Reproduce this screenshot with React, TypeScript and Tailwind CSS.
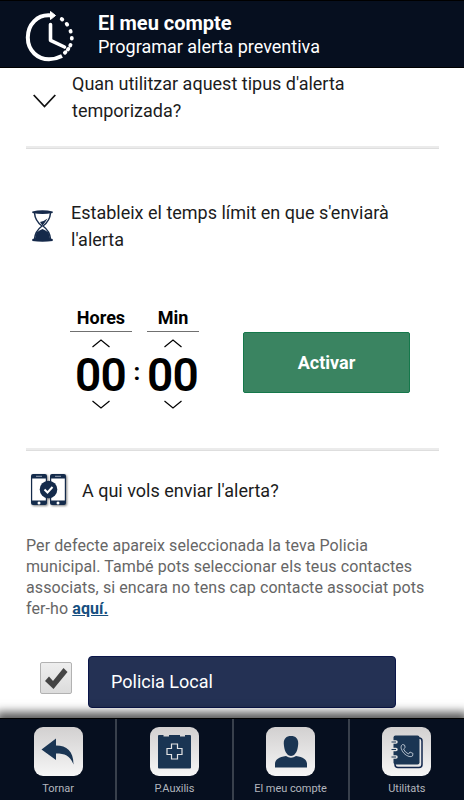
import { ReactNode, useState } from 'react';

interface SpinnerProps {
  label: string;
  value: number;
  width: string;
  onChange: (value: number) => void;
}

const pad = (n: number) => String(n).padStart(2, '0');

const ClockIcon = () => (
  <svg className="h-[52px] w-[50px]" viewBox="0 0 50 52" fill="none" stroke="#fff">
    <path d="M27 5.500C12 3.500 2.800 15 2.800 27.500C2.800 41 13 49.300 24 49.300C29 49.300 33 48 37 46" strokeWidth="4" />
    <path d="M25.500 1.500L30.500 5.500L25.500 9.500Z" fill="#fff" strokeWidth="1" strokeLinejoin="round" />
    <path d="M25.500 14.500V30.300L39.500 37" strokeWidth="3.600" strokeLinecap="round" strokeLinejoin="round" />
    <path d="M36.700 9L37.300 9.500M41.700 13.900L42.200 14.600M45.500 21L45.700 21.600M46.800 28L46.800 28.600M45.500 35L45.200 35.600M43.300 38.900L42.900 39.500M40.400 42.300L39.900 42.700" strokeWidth="3.800" strokeLinecap="round" />
  </svg>
);

const HourglassIcon = () => (
  <svg className="h-8 w-[22px]" viewBox="0 0 22 32" fill="none">
    <path d="M2.500 3C3 10 6 13 10 16C6 19 3 22 2.500 29M18.500 3C18 10 15 13 11 16C15 19 18 22 18.500 29" stroke="#1a2e4e" strokeWidth="1.500" />
    <path d="M.3 1.500Q10.500-.8 20.700 1.500V3Q10.500 4.800.3 3Z" fill="#15294a" />
    <path d="M15.500 8.500Q12.500 11 8 12L10.500 15.500Q13.500 12 15.500 8.500Z" fill="#15294a" />
    <path d="M10.500 19Q13.500 20 16.500 22.500L18 28.500L20.700 29V31Q10.500 32.500.3 31V29L3 28.500L4.500 22.500Q7.500 20 10.500 19Z" fill="#15294a" />
  </svg>
);

const PhonesIcon = () => (
  <svg className="h-[34px] w-[38px] drop-shadow-[1px_1px_1px_rgba(0,0,0,0.5)]" viewBox="0 0 38 34">
    {[0, 19].map((x) => (
      <g key={x} transform={`translate(${x} 0)`}>
        <rect x="1" y="1" width="16" height="31" rx="2" fill="#142b4b" />
        <path d="M2.200 5.500H15.800V27.500H2.200Z" fill="#fff" />
        <path d="M6 3.300H12" stroke="#b6c0ce" strokeWidth=".8" />
        <circle cx="9" cy="30" r="1.500" fill="#fff" />
      </g>
    ))}
    <circle cx="18.500" cy="16.500" r="8.800" fill="#142b4b" />
    <path d="M14.500 16.500L17.500 19.500L22.500 14" fill="none" stroke="#fff" strokeWidth="2" />
  </svg>
);

const TimeSpinner = ({ label, value, width, onChange }: SpinnerProps) => (
  <div className={`flex flex-col items-center ${width}`}>
    <div className="flex h-[29px] w-full justify-center border-b border-[#707070] text-[18px] leading-[29px] font-bold text-black">
      {label}
    </div>
    <button className="mt-[7px] h-[9px]" onClick={() => onChange(value + 1)}>
      <svg className="h-[9px] w-[18px]" viewBox="0 0 18 9" fill="none" stroke="#000" strokeWidth="1.200">
        <path d="M.500 8L9 1L17.500 8" />
      </svg>
    </button>
    <div className="mt-[3px] h-[49px] pr-px text-[46px] leading-[49px] font-semibold tracking-[-0.8px] text-black">{pad(value)}</div>
    <button className="h-[9px]" onClick={() => onChange(Math.max(0, value - 1))}>
      <svg className="h-[9px] w-[18px]" viewBox="0 0 18 9" fill="none" stroke="#000" strokeWidth="1.200">
        <path d="M.500 1L9 8L17.500 1" />
      </svg>
    </button>
  </div>
);

const navItems: { label: string; icon: ReactNode }[] = [
  {
    label: 'Tornar',
    icon: <path d="M7.500 22.500L22 11.500V18.500C33 18.500 39.500 24.500 39.500 37.500C36 28.500 31 26.500 22 26.500V33Z" fill="#1a3553" />,
  },
  {
    label: 'P.Auxilis',
    icon: (
      <>
        <path d="M9 8H13.500V9.500H19V8H30V9.500H35V8H40Q41 8 41 9V40.500Q41 41.500 40 41.500H9Q8 41.500 8 40.500V9Q8 8 9 8Z" fill="#1a3553" />
        <path d="M21.500 17H27.500V21.500H32V27.500H27.500V32H21.500V27.500H17V21.500H21.500Z" fill="none" stroke="#e4e4e4" strokeWidth="1.200" />
      </>
    ),
  },
  {
    label: 'El meu compte',
    icon: (
      <path d="M25 9C20 9 17.500 12 17.800 17C18 20 18.500 22 19 23.500C20 26 22 29 25 29C28 29 30 26 31 23.500C31.500 22 32 20 32.200 17C32.500 12 30 9 25 9ZM9 40.500V37C9 32.500 13 30 20 29Q25 32.500 30 29C37 30 41 32.500 41 37V40.500Z" fill="#1a3553" />
    ),
  },
  {
    label: 'Utilitats',
    icon: (
      <>
        <rect x="13" y="11" width="27" height="29.500" rx="3" fill="#e8e8e8" stroke="#11264c" strokeWidth="1.500" />
        <rect x="11.500" y="8.500" width="26" height="29" rx="2" fill="#1a3553" />
        <path d="M10 15H14M10 22.500H14M10 30H14" stroke="#e0e0e0" strokeWidth="3.500" strokeLinecap="round" />
        <path d="M9.500 15H14M9.500 22.500H14M9.500 30H14" stroke="#1a3553" strokeWidth="1.200" />
        <path d="M20.500 17.500L22.500 18L23.200 20.500L21.500 22Q23 25.500 26.500 27L28 25L31 26.500L30.500 29Q29.500 30 27 29.500Q21 27.500 19 21Q18.700 18.500 20.500 17.500Z" fill="none" stroke="#bdc7d2" strokeWidth=".9" />
      </>
    ),
  },
];

export default function App() {
  const [hours, setHours] = useState(0);
  const [minutes, setMinutes] = useState(0);
  const [checked, setChecked] = useState(true);

  return (
    <div className="flex h-[800px] w-[464px] flex-col overflow-hidden bg-white font-['Roboto',sans-serif]">
      <header className="flex h-[68px] shrink-0 border-t border-b border-black bg-[#060f1f] pt-[9px] pl-[25px] text-white">
        <ClockIcon />
        <div className="ml-[23px] pt-px">
          <h1 className="text-[20px] leading-6 font-bold">El meu compte</h1>
          <p className="text-[18px] leading-6">Programar alerta preventiva</p>
        </div>
      </header>

      <main className="flex-1 overflow-hidden px-[25px] pt-[2px] text-[#1c1c1c]">
        <section className="flex pl-2">
          <svg className="mt-[24px] h-[14px] w-[23px]" viewBox="0 0 23 14" fill="none" stroke="#111" strokeWidth="1.800">
            <path d="M.700 1L11.500 12.500L22.300 1" />
          </svg>
          <p className="ml-4 text-[18px] leading-[27px]">
            Quan utilitzar aquest tipus d'alerta<br />temporizada?
          </p>
        </section>

        <div className="mt-[22px] ml-px h-[3px] border-b border-[#dedede] bg-[#ebebeb]" />

        <section className="mt-[50px] flex pl-[7px]">
          <div className="mt-[11px]">
            <HourglassIcon />
          </div>
          <p className="ml-[17px] text-[18px] leading-[27px]">
            Estableix el temps límit en que s'enviarà<br />l'alerta
          </p>
        </section>

        <section className="mt-[50px] flex pl-[45px]">
          <TimeSpinner label="Hores" value={hours} width="w-[62px]" onChange={setHours} />
          <div className="mt-[45px] flex w-[15px] justify-center pr-[5px] text-[24px] leading-[48px] font-bold text-black">:</div>
          <TimeSpinner label="Min" value={minutes} width="w-[52px]" onChange={setMinutes} />
          <button className="mt-[29px] ml-[44px] h-[61px] w-[167px] rounded-[2px] border border-[#15784b] bg-[#3a8461] text-[18px] font-bold text-white">
            Activar
          </button>
        </section>

        <div className="mt-[39px] ml-px h-[3px] border-b border-[#dedede] bg-[#ebebeb]" />

        <section className="mt-[22px] flex items-center pl-[5px]">
          <PhonesIcon />
          <p className="ml-[14px] text-[18px] leading-[27px]">A qui vols enviar l'alerta?</p>
        </section>

        <p className="mt-[28px] ml-px text-[16px] leading-[21px] tracking-[0.09px] whitespace-nowrap text-[#666]">
          Per defecte apareix seleccionada la teva Policia<br />
          municipal. També pots seleccionar els teus contactes<br />
          associats, si encara no tens cap contacte associat pots<br />
          fer-ho{' '}
          <a href="#" className="font-bold text-[#164f80] underline">aquí.</a>
        </p>

        <section className="mt-[37px] flex pl-[15px]">
          <button
            className="mt-[6px] flex size-8 items-center justify-center rounded-[2px] border border-[#b2b2b2] bg-linear-to-b from-[#eee] to-[#dcdcdc]"
            onClick={() => setChecked(!checked)}
          >
            {checked && (
              <svg className="h-[23px] w-[24px]" viewBox="0 0 24 23">
                <path d="M1 14L5 9.500L9 14L19.500 1L23.500 5L9.500 22Z" fill="#444" />
              </svg>
            )}
          </button>
          <div className="ml-4 flex h-[52px] w-[308px] items-center rounded border border-[#0b164a] bg-[#243154] pb-px pl-[22px] text-[18px] text-white">
            Policia Local
          </div>
        </section>
      </main>

      <nav className="relative flex h-[82px] shrink-0 divide-x-2 divide-[#38404c] border-t border-black bg-[#060f1f] pl-px shadow-[0_-2px_9px_4px_rgba(0,0,0,0.65)]">
        {navItems.map((item) => (
          <a key={item.label} href="#" className="flex flex-1 flex-col items-center pt-2">
            <span className="rounded-[9px] bg-linear-to-b from-[#d2d0d0] to-[#f6f6f6]">
              <svg className="size-[49px]" viewBox="0 0 49 49">{item.icon}</svg>
            </span>
            <span className="mt-[5px] text-[11px] leading-[15px] tracking-[-0.05px] text-[#b2b6bd]">{item.label}</span>
          </a>
        ))}
      </nav>
    </div>
  );
}
